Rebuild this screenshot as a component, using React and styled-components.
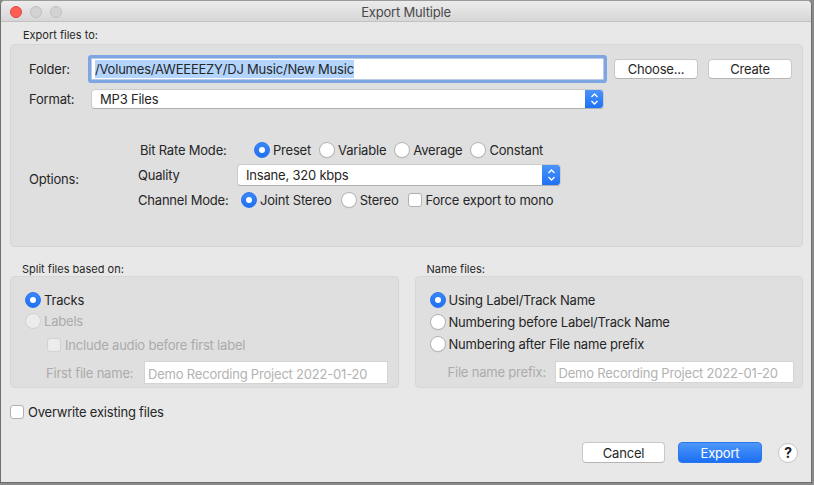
import React from "react";
import styled, { createGlobalStyle, css } from "styled-components";

const Global = createGlobalStyle`
  html, body { margin: 0; padding: 0; background: #8a8a8a; }
  body { font-family: Inter, "Noto Sans", sans-serif; }
  #root { width: 814px; height: 485px; }
`;

const Window = styled.div`
  width: 810px;
  height: 481px;
  background: #e8e8e8;
  border: 1px solid #6f6f6f;
  border-top-color: #9a9a9a;
  border-radius: 5px 5px 0 0;
  overflow: hidden;
  display: flex;
  flex-direction: column;
  color: #262626;
  font-size: 13px;
  letter-spacing: -0.2px;
`;

const TitleBar = styled.div`
  height: 20px;
  flex: none;
  display: flex;
  align-items: center;
  position: relative;
  background: linear-gradient(#ececec, #d6d6d6);
  border-bottom: 1px solid #c2c2c2;
`;

const Lights = styled.div`
  display: flex;
  gap: 8px;
  padding-left: 9px;
  margin-top: 2px;
`;

const Light = styled.span`
  width: 12px;
  height: 12px;
  border-radius: 50%;
  box-sizing: border-box;
  background: ${(p) => (p.$red ? "#fd5f57" : "#d3d3d3")};
  border: 1px solid ${(p) => (p.$red ? "#e2463f" : "#c0c0c0")};
`;

const Title = styled.div`
  position: absolute;
  left: 0;
  right: 0;
  top: 3px;
  text-align: center;
  font-size: 13px;
  color: #4a4a4a;
  pointer-events: none;
`;

const Body = styled.div`
  flex: 1;
  padding: 6px 8px 0 9px;
  display: flex;
  flex-direction: column;
`;

const SectionLabel = styled.div`
  font-size: 11px;
  letter-spacing: 0;
  line-height: 14px;
  height: 14px;
  padding-left: ${(p) => p.$indent}px;
  color: #262626;
`;

const GroupBox = styled.div`
  background: #dfdfdf;
  border: 1px solid #d6d6d6;
  border-radius: 4px;
  box-sizing: border-box;
  height: ${(p) => p.$h}px;
  padding: ${(p) => p.$pad};
  display: flex;
  flex-direction: column;
`;

const FormRow = styled.div`
  display: flex;
  align-items: center;
  margin-top: ${(p) => p.$mt || 0}px;
  padding-left: ${(p) => p.$pl || 0}px;
`;

const Label = styled.span`
  flex: none;
  width: ${(p) => (p.$w ? `${p.$w}px` : "auto")};
  margin-left: ${(p) => p.$ml || 0}px;
  color: ${(p) => (p.$disabled ? "#ababab" : "#262626")};
  white-space: nowrap;
`;

const TextInput = styled.div`
  box-sizing: border-box;
  width: 513px;
  height: 22px;
  background: #fff;
  border: 1px solid #b9c9e6;
  box-shadow: 0 0 0 3px #7ea6e3;
  border-radius: 1px;
  display: flex;
  align-items: center;
  padding-left: 3px;
  font-size: 13px;
`;

const Selected = styled.span`
  background: #b3d4fd;
  padding: 1px 0;
`;

const PushButton = styled.button`
  box-sizing: border-box;
  width: ${(p) => p.$w}px;
  height: ${(p) => p.$h || 20}px;
  margin-left: ${(p) => p.$ml || 0}px;
  font-family: inherit;
  font-size: 13px;
  letter-spacing: -0.2px;
  border-radius: 4px;
  padding: 0;
  ${(p) =>
    p.$primary
      ? css`
          background: linear-gradient(#4d97fa, #1c6ff3);
          border: 1px solid #2a76ee;
          color: #fff;
        `
      : css`
          background: #fff;
          border: 1px solid #c8c8c8;
          border-bottom-color: #b5b5b5;
          color: #262626;
        `}
`;

const Popup = styled.div`
  box-sizing: border-box;
  width: ${(p) => p.$w}px;
  height: ${(p) => p.$h || 20}px;
  background: #fff;
  border: 1px solid #cbcbcb;
  border-bottom-color: #b0b0b0;
  border-radius: 4px;
  display: flex;
  align-items: center;
  padding-left: 8px;
  position: relative;
  overflow: hidden;
`;

const Stepper = styled.span`
  position: absolute;
  right: -1px;
  top: -1px;
  bottom: -1px;
  width: 19px;
  background: linear-gradient(#4c95fb, #1d6ff5);
  border-radius: 0 4px 4px 0;
  display: flex;
  align-items: center;
  justify-content: center;
`;

const Options = styled.div`
  display: flex;
  margin-top: 30px;
`;

const OptionsLabel = styled.span`
  width: 109px;
  flex: none;
  align-self: center;
  margin-top: 8px;
`;

const OptionsRows = styled.div`
  display: flex;
  flex-direction: column;
  gap: 3px;
`;

const SubRow = styled.div`
  display: flex;
  align-items: center;
  height: 22px;
`;

const Choices = styled.div`
  display: flex;
  align-items: center;
  gap: ${(p) => p.$gap || 8}px;
`;

const Choice = styled.label`
  display: flex;
  align-items: center;
  gap: 3px;
  line-height: 16px;
  color: ${(p) => (p.$disabled ? "#ababab" : "#262626")};
  white-space: nowrap;
`;

const RadioDot = styled.span`
  width: 16px;
  height: 16px;
  box-sizing: border-box;
  border-radius: 50%;
  flex: none;
  display: flex;
  align-items: center;
  justify-content: center;
  ${(p) =>
    p.$on
      ? css`
          background: linear-gradient(#3a87f8, #1f70f2);
          border: 1px solid #2a76ee;
          &::after {
            content: "";
            width: 6px;
            height: 6px;
            border-radius: 50%;
            background: #fff;
          }
        `
      : p.$disabled
      ? css`
          background: #ececec;
          border: 1px solid #d2d2d2;
        `
      : css`
          background: #fff;
          border: 1px solid #b4b4b4;
          box-shadow: 0 0.5px 0 rgba(0, 0, 0, 0.08);
        `}
`;

const CheckBox = styled.span`
  width: 14px;
  height: 14px;
  box-sizing: border-box;
  border-radius: 3px;
  flex: none;
  background: ${(p) => (p.$disabled ? "#ececec" : "#fff")};
  border: 1px solid ${(p) => (p.$disabled ? "#d2d2d2" : "#b0b0b0")};
`;

const CheckChoice = styled(Choice)`
  gap: 4px;
`;

const Columns = styled.div`
  display: flex;
  gap: 16px;
  margin-top: 15px;
`;

const Column = styled.div`
  flex: 1;
  display: flex;
  flex-direction: column;
`;

const GhostInput = styled.div`
  box-sizing: border-box;
  width: ${(p) => p.$w}px;
  height: ${(p) => p.$h}px;
  background: #fff;
  border: 1px solid #d4d4d4;
  color: #b2b2b2;
  display: flex;
  align-items: center;
  padding-left: 3px;
  padding-top: 2px;
  white-space: nowrap;
`;

const OverwriteRow = styled.div`
  display: flex;
  margin-top: 16px;
`;

const Footer = styled.div`
  display: flex;
  align-items: center;
  justify-content: flex-end;
  margin-top: 22px;
  padding-right: 5px;
`;

const Help = styled.span`
  width: 20px;
  height: 20px;
  box-sizing: border-box;
  border-radius: 50%;
  background: #fff;
  border: 1px solid #c4c4c4;
  margin-left: 16px;
  display: flex;
  align-items: center;
  justify-content: center;
  font-weight: 700;
  font-size: 14px;
  color: #1e1e1e;
`;

function Radio({ on, disabled, children }) {
  return (
    <Choice $disabled={disabled}>
      <RadioDot $on={on} $disabled={disabled} />
      {children}
    </Choice>
  );
}

function Check({ disabled, children }) {
  return (
    <CheckChoice $disabled={disabled}>
      <CheckBox $disabled={disabled} />
      {children}
    </CheckChoice>
  );
}

function StepperIcon() {
  return (
    <svg width="9" height="14" viewBox="0 0 9 14">
      <path d="M1.5 5 L4.5 2 L7.5 5" stroke="#fff" strokeWidth="1.3" fill="none" />
      <path d="M1.5 9 L4.5 12 L7.5 9" stroke="#fff" strokeWidth="1.3" fill="none" />
    </svg>
  );
}

export default function App() {
  return (
    <>
      <Global />
      <Window>
        <TitleBar>
          <Lights>
            <Light $red />
            <Light />
            <Light />
          </Lights>
          <Title>Export Multiple</Title>
        </TitleBar>
        <Body>
          <SectionLabel $indent={13}>Export files to:</SectionLabel>
          <GroupBox $h={203} $pad="13px 0 0 18px" style={{ marginTop: 2 }}>
            <FormRow>
              <Label $w={62}>Folder:</Label>
              <TextInput>
                <Selected>/Volumes/AWEEEEZY/DJ Music/New Music</Selected>
              </TextInput>
              <PushButton $w={84} $ml={10}>Choose...</PushButton>
              <PushButton $w={84} $ml={10}>Create</PushButton>
            </FormRow>
            <FormRow $mt={9}>
              <Label $w={62}>Format:</Label>
              <Popup $w={513}>
                MP3 Files
                <Stepper>
                  <StepperIcon />
                </Stepper>
              </Popup>
            </FormRow>
            <Options>
              <OptionsLabel>Options:</OptionsLabel>
              <OptionsRows>
                <SubRow>
                  <Label $ml={2} $w={114}>Bit Rate Mode:</Label>
                  <Choices>
                    <Radio on>Preset</Radio>
                    <Radio>Variable</Radio>
                    <Radio>Average</Radio>
                    <Radio>Constant</Radio>
                  </Choices>
                </SubRow>
                <SubRow>
                  <Label $w={99}>Quality</Label>
                  <Popup $w={324} $h={22}>
                    Insane, 320 kbps
                    <Stepper>
                      <StepperIcon />
                    </Stepper>
                  </Popup>
                </SubRow>
                <SubRow>
                  <Label $w={103}>Channel Mode:</Label>
                  <Choices $gap={9}>
                    <Radio on>Joint Stereo</Radio>
                    <Radio>Stereo</Radio>
                    <Check>Force export to mono</Check>
                  </Choices>
                </SubRow>
              </OptionsRows>
            </Options>
          </GroupBox>
          <Columns>
            <Column>
              <SectionLabel $indent={12}>Split files based on:</SectionLabel>
              <GroupBox $h={112} $pad="15px 0 0 14px">
                <FormRow>
                  <Radio on>Tracks</Radio>
                </FormRow>
                <FormRow $mt={5}>
                  <Radio disabled>Labels</Radio>
                </FormRow>
                <FormRow $mt={8} $pl={22}>
                  <Check disabled>Include audio before first label</Check>
                </FormRow>
                <FormRow $mt={8} $pl={21}>
                  <Label $disabled $w={98}>First file name:</Label>
                  <GhostInput $w={244} $h={23}>Demo Recording Project 2022-01-20</GhostInput>
                </FormRow>
              </GroupBox>
            </Column>
            <Column>
              <SectionLabel $indent={12}>Name files:</SectionLabel>
              <GroupBox $h={112} $pad="15px 0 0 14px">
                <FormRow>
                  <Radio on>Using Label/Track Name</Radio>
                </FormRow>
                <FormRow $mt={6}>
                  <Radio>Numbering before Label/Track Name</Radio>
                </FormRow>
                <FormRow $mt={6}>
                  <Radio>Numbering after File name prefix</Radio>
                </FormRow>
                <FormRow $mt={9} $pl={18}>
                  <Label $disabled $w={107}>File name prefix:</Label>
                  <GhostInput $w={239} $h={22}>Demo Recording Project 2022-01-20</GhostInput>
                </FormRow>
              </GroupBox>
            </Column>
          </Columns>
          <OverwriteRow>
            <Check>Overwrite existing files</Check>
          </OverwriteRow>
          <Footer>
            <PushButton $w={83} $h={21}>Cancel</PushButton>
            <PushButton $w={84} $h={21} $ml={13} $primary>Export</PushButton>
            <Help>?</Help>
          </Footer>
        </Body>
      </Window>
    </>
  );
}
